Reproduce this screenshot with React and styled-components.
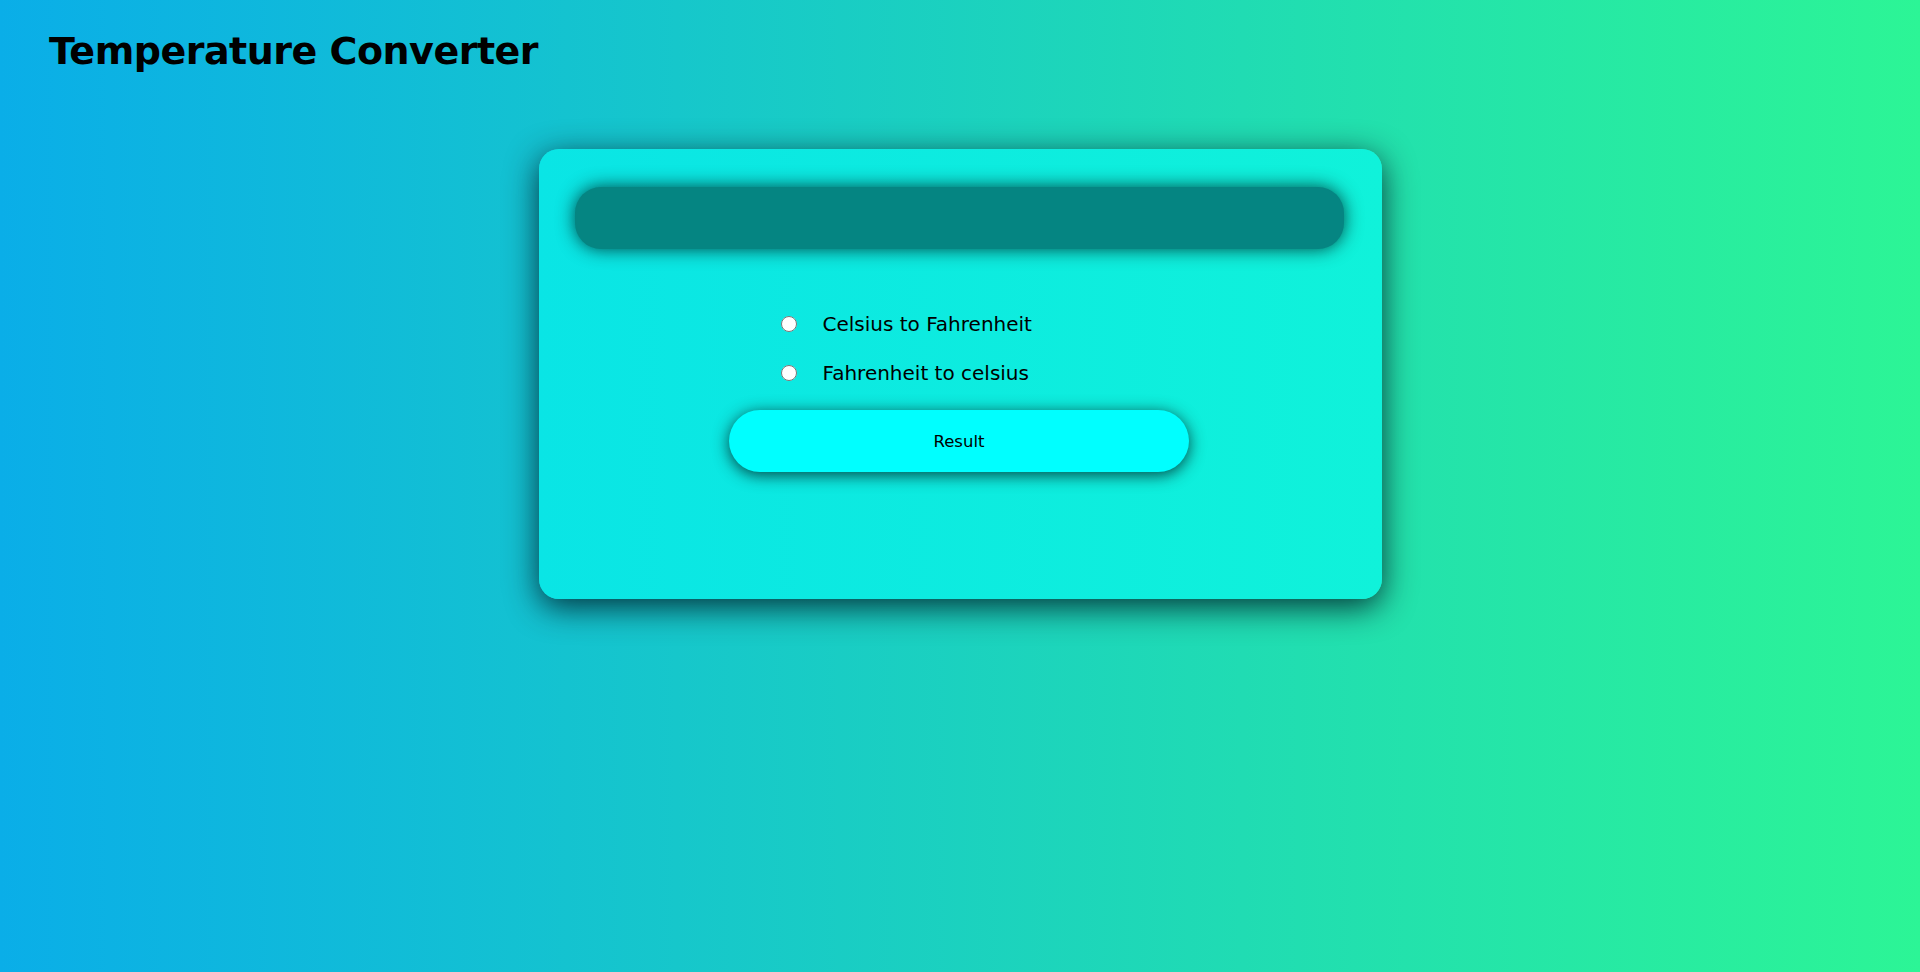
import React, { useState } from 'react';
import styled, { createGlobalStyle } from 'styled-components';

const GlobalStyle = createGlobalStyle`
  html, body {
    margin: 0;
    padding: 0;
  }
  body {
    min-height: 100vh;
    background: linear-gradient(to right, #0aaee8, #2cf596);
    font-family: "DejaVu Sans", "Open Sans", sans-serif;
    color: #000;
  }
`;

const Page = styled.div`
  min-height: 100vh;
  padding: 25px 0 0;
  box-sizing: border-box;
`;

const Title = styled.h1`
  margin: 0 0 0 49px;
  font-size: 38px;
  font-weight: 700;
  letter-spacing: -0.5px;
  line-height: 52px;
`;

const Card = styled.div`
  width: 843px;
  height: 450px;
  margin: 72px auto 0;
  box-sizing: border-box;
  padding: 38px 38px 0 36px;
  border-radius: 20px;
  background: linear-gradient(to right, #0ae5e5, #10f2da);
  box-shadow: 0 8px 32px rgba(0, 25, 35, 0.85);
  display: flex;
  flex-direction: column;
  align-items: center;
`;

const Display = styled.div`
  width: 100%;
  height: 62px;
  border-radius: 26px;
  background: #058582;
  box-shadow: 0 0 18px rgba(0, 40, 40, 0.85);
`;

const Options = styled.div`
  align-self: flex-start;
  margin: 65px 0 0 206px;
  display: flex;
  flex-direction: column;
  gap: 29px;
`;

const Option = styled.label`
  display: flex;
  align-items: center;
  gap: 26px;
  font-size: 20px;
  line-height: 20px;
  cursor: pointer;
`;

const Radio = styled.input`
  width: 16px;
  height: 16px;
  margin: 0;
  accent-color: #0a84ff;
`;

const ResultButton = styled.button`
  margin-top: 27px;
  width: 460px;
  height: 62px;
  border: none;
  border-radius: 31px;
  background: #00ffff;
  font-family: "DejaVu Sans", "Open Sans", sans-serif;
  font-size: 16.5px;
  color: #000;
  box-shadow: 0 3px 16px rgba(0, 40, 40, 0.85);
  cursor: pointer;
`;

export default function App() {
  const [mode, setMode] = useState('');

  return (
    <Page>
      <GlobalStyle />
      <Title>Temperature Converter</Title>
      <Card>
        <Display />
        <Options>
          <Option>
            <Radio type="radio" name="mode" checked={mode === 'cf'} onChange={() => setMode('cf')} />
            Celsius to Fahrenheit
          </Option>
          <Option>
            <Radio type="radio" name="mode" checked={mode === 'fc'} onChange={() => setMode('fc')} />
            Fahrenheit to celsius
          </Option>
        </Options>
        <ResultButton type="button">Result</ResultButton>
      </Card>
    </Page>
  );
}
